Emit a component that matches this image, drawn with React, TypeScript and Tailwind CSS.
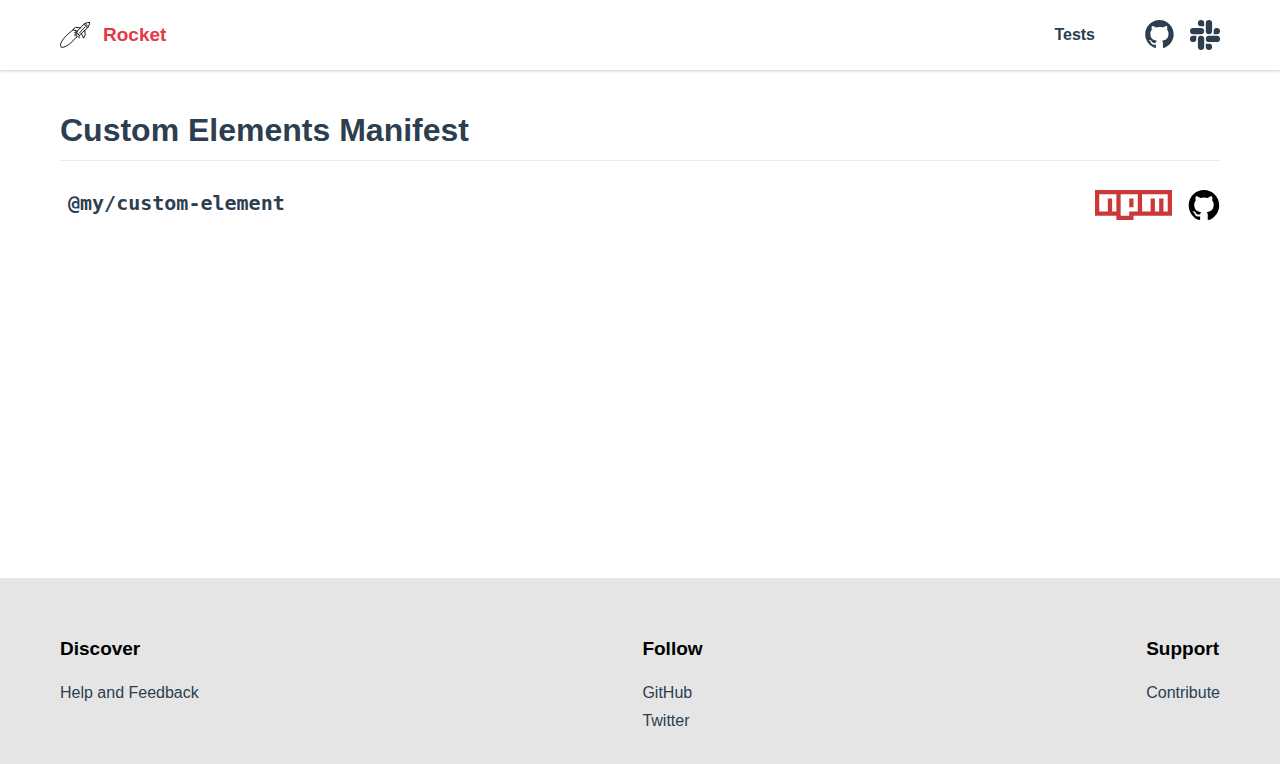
import React from "react";
import { SiSlack } from "react-icons/si";

function GithubMark({ className }: { className: string }) {
  return (
    <svg viewBox="0 0 98 96" fill="currentColor" className={className} aria-hidden="true">
      <path
        fillRule="evenodd"
        clipRule="evenodd"
        d="M48.854 0C21.839 0 0 22 0 49.217c0 21.756 13.993 40.172 33.405 46.69 2.427.49 3.316-1.059 3.316-2.362 0-1.141-.08-5.052-.08-9.127-13.59 2.934-16.42-5.867-16.42-5.867-2.184-5.704-5.42-7.17-5.42-7.17-4.448-3.015.324-3.015.324-3.015 4.934.326 7.523 5.052 7.523 5.052 4.367 7.496 11.404 5.378 14.235 4.074.404-3.178 1.699-5.378 3.074-6.6-10.839-1.141-22.243-5.378-22.243-24.283 0-5.378 1.94-9.778 5.014-13.2-.485-1.222-2.184-6.275.486-13.038 0 0 4.125-1.304 13.426 5.052a46.97 46.97 0 0 1 12.214-1.63c4.125 0 8.33.571 12.213 1.63 9.302-6.356 13.427-5.052 13.427-5.052 2.67 6.763.97 11.816.485 13.038 3.155 3.422 5.015 7.822 5.015 13.2 0 18.905-11.404 23.06-22.324 24.283 1.78 1.548 3.316 4.481 3.316 9.126 0 6.6-.08 11.897-.08 13.526 0 1.304.89 2.853 3.316 2.364 19.412-6.52 33.405-24.935 33.405-46.691C97.707 22 75.788 0 48.854 0z"
      />
    </svg>
  );
}

function NpmLogo() {
  return (
    <svg viewBox="0 0 18 7" className="h-[30px] w-[77px]" aria-hidden="true">
      <path fill="#fff" d="M1 1h16v4H8v1H6V5H1z" />
      <path
        fill="#cb3837"
        d="M0 0h18v6H9v1H5V6H0V0zm1 5h2V2h1v3h1V1H1v4zm5-4v5h2V5h2V1H6zm2 1h1v2H8V2zm3-1v4h2V2h1v3h1V2h1v3h1V1h-6z"
      />
    </svg>
  );
}

function RocketLogo() {
  return (
    <svg
      viewBox="0 0 30 30"
      className="size-[30px]"
      fill="none"
      stroke="#000"
      strokeWidth="0.9"
      strokeLinejoin="round"
      strokeLinecap="round"
      aria-hidden="true"
    >
      <path d="M29.6 2.4C26.8 2.5 25 3.2 23.6 4.4L16.4 12.2 19.2 15.4 27.2 8.2C28.8 6.6 29.4 4.8 29.6 2.4z" />
      <path d="M25 3.4 28.4 6.8M24.2 4.4 27.4 7.8M19.4 13 25 7" />
      <path d="M20.4 7.8 15.4 7.4 12.8 9.6 17.4 11.2M24.8 10.6 25.2 14.6 23.6 18.2 21.4 13.6" />
      <path d="M13.6 9.6C6.5 14.4.8 20.8.4 25.5.3 28.2 4 27.8 8.2 24.9 10.8 23 13.3 20.7 15.6 18" />
      <path
        strokeWidth="0.6"
        d="M16.4 12.2 14.4 12.6 16.4 13.8 14.2 15.2 16.6 15.4 16 17.8 18 16.2 19.2 18.2 19.2 15.4M17.2 13.4 18.2 14.6M15.6 11 16.6 15"
      />
    </svg>
  );
}

const columns = [
  { title: "Discover", links: ["Help and Feedback"] },
  { title: "Follow", links: ["GitHub", "Twitter"] },
  { title: "Support", links: ["Contribute"] },
];

export default function App() {
  return (
    <div className="flex min-h-screen flex-col bg-white font-['Liberation_Sans',Arial,sans-serif] text-base text-[#2c3e50]">
      <header className="h-[70px] shrink-0 shadow-[0_1px_3px_rgba(0,0,0,0.2)]">
        <div className="mx-auto flex h-full max-w-[1200px] items-center justify-between px-5">
          <a href="#" className="flex items-center gap-[13px] text-[19px] font-bold text-[#e63946]">
            <RocketLogo />
            <span>Rocket</span>
          </a>
          <nav className="flex items-center">
            <a href="#tests" className="mr-[50px] font-bold">Tests</a>
            <div className="flex items-start gap-4">
              <a href="#github" aria-label="GitHub">
                <GithubMark className="h-7 w-[29px]" />
              </a>
              <a href="#slack" aria-label="Slack">
                <SiSlack className="size-[30px]" />
              </a>
            </div>
          </nav>
        </div>
      </header>

      <main className="mx-auto w-full max-w-[1200px] grow px-5 pt-10">
        <h1 className="border-b border-[#eaecef] pb-[10px] text-[32px] leading-10 font-bold">
          Custom Elements Manifest
        </h1>
        <section className="mt-[29px] flex items-start justify-between">
          <h2 className="px-2 font-['DejaVu_Sans_Mono',monospace] text-xl leading-[26px] font-bold">
            @my/custom-element
          </h2>
          <div className="flex items-start gap-4">
            <a href="#npm" aria-label="npm">
              <NpmLogo />
            </a>
            <a href="#repository" aria-label="GitHub repository" className="text-black">
              <GithubMark className="h-[30px] w-8" />
            </a>
          </div>
        </section>
      </main>

      <footer className="shrink-0 bg-[#e5e5e5]">
        <div className="mx-auto flex max-w-[1200px] justify-between px-5 pt-[60px] pb-[29px]">
          {columns.map((column) => (
            <nav key={column.title} aria-label={column.title}>
              <h3 className="mb-[19px] text-[19px] leading-[22px] font-bold text-black">{column.title}</h3>
              <ul>
                {column.links.map((link) => (
                  <li key={link} className="leading-7">
                    <a href="#">{link}</a>
                  </li>
                ))}
              </ul>
            </nav>
          ))}
        </div>
      </footer>
    </div>
  );
}
